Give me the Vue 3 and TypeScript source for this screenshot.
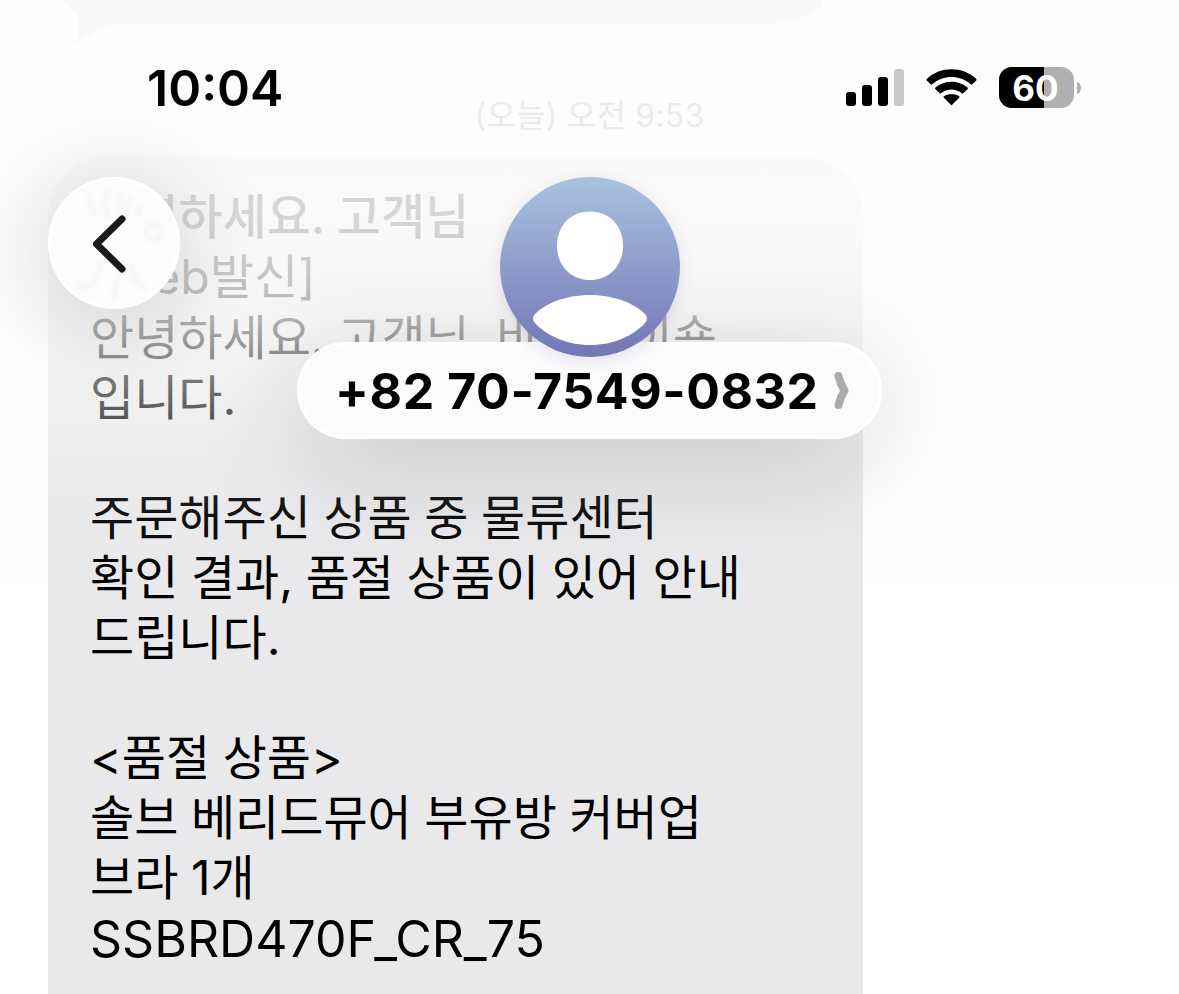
<script setup lang="ts">
interface Line {
  text: string
  tone?: 'subject' | 'latin'
}

const time = '10:04'
const battery = 60
const phone = '+82 70-7549-0832'
const stamp = '(오늘) 오전 9:53'

const lines: Line[] = [
  { text: '안녕하세요. 고객님', tone: 'subject' },
  { text: '[Web발신]' },
  { text: '안녕하세요. 고객님, 바디메이숍' },
  { text: '입니다.' },
  { text: '' },
  { text: '주문해주신 상품 중 물류센터' },
  { text: '확인 결과, 품절 상품이 있어 안내' },
  { text: '드립니다.' },
  { text: '' },
  { text: '<품절 상품>' },
  { text: '솔브 베리드뮤어 부유방 커버업' },
  { text: '브라 1개' },
  { text: 'SSBRD470F_CR_75', tone: 'latin' },
]
</script>

<template>
  <main class="screen">
    <section class="thread">
      <div class="previous">
        <svg class="tail" width="60" height="48" viewBox="0 0 60 48">
          <path d="M5 0C18 8 25 18 24 29C23 36 22 40 17 43C31 42 38 27 60 24V0Z" fill="#e9e9eb" />
        </svg>
      </div>
      <div class="stamp">{{ stamp }}</div>
      <article class="bubble">
        <p v-for="(line, i) in lines" :key="i" class="line" :class="line.tone">{{ line.text }}</p>
      </article>
    </section>

    <div class="fade"></div>

    <header class="status">
      <span class="time">{{ time }}</span>
      <div class="indicators">
        <svg class="signal" width="58" height="38" viewBox="0 0 58 38">
          <rect x="0" y="23" width="10" height="14" rx="3" />
          <rect x="16" y="16" width="10" height="21" rx="3" />
          <rect x="32" y="8" width="10" height="29" rx="3" />
          <rect x="48" y="0" width="10" height="37" rx="3" fill="#c8c8c8" />
        </svg>
        <svg class="wifi" width="51" height="38" viewBox="0 0 52 38">
          <path d="M1 11.5Q0 10.500 1 9.500C15-3.200 37-3.200 51 9.500Q52 10.500 51 11.500L47.200 15.300Q46.500 16 45.600 15.200C34 5.400 18 5.400 6.400 15.200Q5.500 16 4.800 15.300Z" />
          <path d="M9.500 20Q8.700 19.200 9.600 18.400C19 10.800 33 10.800 42.400 18.400Q43.300 19.200 42.500 20L38.300 24.200Q37.500 25 36.600 24.300C30 19.200 22 19.200 15.400 24.300Q14.500 25 13.700 24.200Z" />
          <path d="M18 28.800Q17.300 28 18.200 27.400C23 24.700 29 24.700 33.800 27.400Q34.700 28 34 28.800L26.700 36.200Q26 37 25.300 36.200Z" />
        </svg>
        <div class="battery">
          <div class="cell">
            <div class="charge" :style="{ width: battery + '%' }"></div>
            <span class="level">{{ battery }}</span>
          </div>
          <i class="nub"></i>
        </div>
      </div>
    </header>

    <button class="back" aria-label="Back">
      <svg width="132" height="132" viewBox="0 0 132 132" fill="none">
        <g class="glass" stroke="#dfdfe3" stroke-width="5" stroke-linecap="round">
          <path d="M42 18Q40 30 48 39M59 14Q55 29 60 40M72 17L71 34M83 20Q76 29 77 39M94 27Q88 32 91 38" />
          <path d="M98 54A8 8 0 1 1 111 61A8 8 0 0 1 98 54M29 107Q45 116 50 97L54 86M66 121Q66 103 75 93M84 88Q84 105 98 112" />
        </g>
        <path d="M74 42L48.500 67L74 92" stroke="#1a1a1a" stroke-width="7" stroke-linecap="round" stroke-linejoin="round" />
      </svg>
    </button>

    <button class="contact">
      <span class="number">{{ phone }}</span>
      <svg width="16" height="40" viewBox="0 0 16 40" fill="none">
        <path d="M4.500 5Q6 12 10.500 19.500Q6 27 4.500 34" stroke="#ababad" stroke-width="8" stroke-linecap="round" stroke-linejoin="round" />
      </svg>
    </button>

    <div class="avatar">
      <svg width="180" height="180" viewBox="0 0 180 180" fill="#fff">
        <path d="M90 34.500C109.500 34.500 123 49 123 68.500C123 88.500 109.500 103 90 103C70.500 103 57 88.500 57 68.500C57 49 70.500 34.500 90 34.500Z" />
        <path d="M90 118C115 118 135 127 145 137Q149 141 145 146C133 159 113 168 90 168C67 168 47 159 35 146Q31 141 35 137C45 127 65 118 90 118Z" />
      </svg>
    </div>
  </main>
</template>

<style>
body {
  margin: 0;
  background: #fff;
}
</style>

<style scoped>
.screen {
  position: relative;
  width: 1179px;
  height: 994px;
  overflow: hidden;
  background: #fff;
  color: #000;
  font-family: Inter, "Noto Sans CJK KR", sans-serif;
}

button {
  border: 0;
  padding: 0;
  font: inherit;
  color: inherit;
}

.thread {
  display: flex;
  flex-direction: column;
}

.previous {
  display: flex;
  width: 763px;
  height: 24px;
  margin-left: 60px;
  background: linear-gradient(90deg, transparent 54px, #e9e9eb 54px);
  border-radius: 0 0 66px 0 / 0 0 24px 0;
}

.tail {
  flex: none;
  margin-left: -5px;
}

.stamp {
  height: 133px;
  line-height: 184px;
  text-align: center;
  font-size: 32px;
  letter-spacing: 0.2px;
  color: #9a9a9e;
}

.bubble {
  box-sizing: border-box;
  width: 815px;
  height: 900px;
  margin-left: 48px;
  padding: 30.4px 42px 0;
  background: #e9e9eb;
  border-radius: 60px 60px 0 0;
}

.line {
  height: 60.1px;
  margin: 0;
  line-height: 60px;
  font-size: 48px;
  word-spacing: -0.9px;
  white-space: nowrap;
}

.subject {
  font-weight: 500;
}

.latin {
  font-size: 50px;
  line-height: 61px;
}

.fade {
  position: absolute;
  inset: 0 0 auto;
  height: 600px;
  background: linear-gradient(
    rgba(252, 252, 252, 0.8) 0,
    rgba(252, 252, 252, 0.85) 215px,
    rgba(252, 252, 252, 0.79) 275px,
    rgba(252, 252, 252, 0.7) 320px,
    rgba(252, 252, 252, 0.57) 355px,
    rgba(252, 252, 252, 0.35) 415px,
    rgba(252, 252, 252, 0.17) 465px,
    rgba(252, 252, 252, 0.07) 515px,
    rgba(252, 252, 252, 0) 590px
  );
}

.status {
  position: absolute;
  inset: 59.5px 98px auto 147px;
  display: flex;
  align-items: center;
  justify-content: space-between;
  height: 56px;
}

.time {
  font-size: 50px;
  font-weight: 600;
  letter-spacing: 0;
}

.indicators {
  display: flex;
  align-items: center;
}

.wifi {
  margin: 0 22px;
}

.battery {
  display: flex;
  align-items: center;
  gap: 3px;
}

.cell {
  position: relative;
  display: flex;
  align-items: center;
  justify-content: center;
  width: 75px;
  height: 41px;
  border-radius: 13px;
  overflow: hidden;
  background: #b0b0b0;
}

.charge {
  position: absolute;
  inset: 0 auto 0 0;
  background: #000;
}

.level {
  position: relative;
  left: -1px;
  color: #fff;
  font-size: 35px;
  font-weight: 650;
}

.nub {
  width: 4px;
  height: 12px;
  border-radius: 0 4px 4px 0 / 0 6px 6px 0;
  background: #b0b0b0;
}

.back {
  position: absolute;
  left: 48px;
  top: 177px;
  width: 132px;
  height: 132px;
  border-radius: 50%;
  background: #fcfcfd;
  box-shadow: inset 0 0 0 3px #fff, 0 12px 96px rgba(0, 0, 0, 0.19);
}

.back svg {
  display: block;
}

.glass {
  opacity: 0.22;
  filter: blur(2px);
}

.contact {
  position: absolute;
  left: 297px;
  top: 342px;
  display: flex;
  align-items: center;
  justify-content: space-between;
  box-sizing: border-box;
  width: 585px;
  height: 97px;
  padding: 0 32px 0 38px;
  border-radius: 49px;
  background: #fbfbfd;
  box-shadow: inset 0 0 0 3px #fff, 0 24px 110px rgba(0, 0, 0, 0.17);
}

.number {
  font-size: 50px;
  font-weight: 700;
  letter-spacing: 0.6px;
  font-feature-settings: "calt" 0;
  white-space: nowrap;
}

.avatar {
  position: absolute;
  left: 499.5px;
  top: 177px;
  width: 180px;
  height: 180px;
  border-radius: 50%;
  background: linear-gradient(#aac2e0, #7276b5);
  box-shadow: 0 4px 16px rgba(60, 60, 110, 0.12);
}
</style>
